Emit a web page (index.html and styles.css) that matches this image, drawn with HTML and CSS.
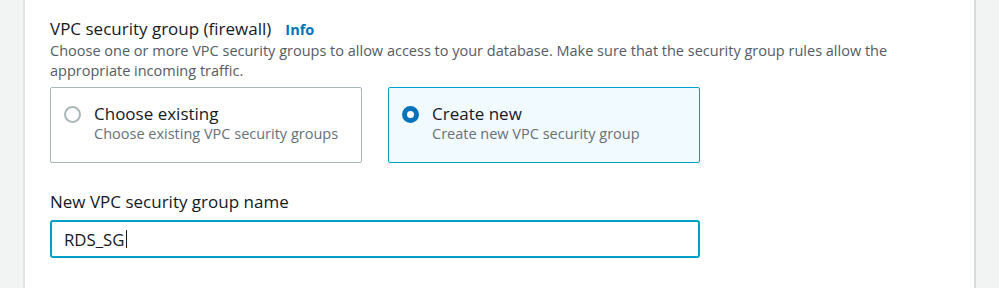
FILE: index.html
```html
<!DOCTYPE html>
<html lang="en">
<head>
  <meta charset="UTF-8">
  <title>VPC security group</title>
  <link rel="stylesheet" href="styles.css">
</head>
<body>
  <div class="page">
    <section class="panel">
      <div class="field">
        <div class="label-row">
          <span class="label">VPC security group (firewall)</span>
          <a class="info" href="#">Info</a>
        </div>
        <p class="description">Choose one or more VPC security groups to allow access to your database. Make sure that the security group rules allow the appropriate incoming traffic.</p>

        <div class="tiles">
          <label class="tile">
            <span class="radio"></span>
            <span class="tile-text">
              <span class="tile-title">Choose existing</span>
              <span class="tile-sub">Choose existing VPC security groups</span>
            </span>
          </label>
          <label class="tile selected">
            <span class="radio checked"></span>
            <span class="tile-text">
              <span class="tile-title">Create new</span>
              <span class="tile-sub">Create new VPC security group</span>
            </span>
          </label>
        </div>
      </div>

      <div class="field">
        <div class="label">New VPC security group name</div>
        <div class="input">RDS_SG<span class="caret"></span></div>
      </div>
    </section>
  </div>
</body>
</html>
```

FILE: styles.css
```css
body {
  margin: 0;
  background-color: #f2f3f3;
  font-family: 'Open Sans', 'Noto Sans', sans-serif;
  font-size: 14px;
  color: #16191f;
}
.page {
  padding: 0 23px 0 23px;
  height: 288px;
}
.panel {
  background-color: white;
  border-left: 2px solid #e1e4e4;
  border-right: 2px solid #d5dbdb;
  height: 100%;
  padding: 18px 25px 0 25px;
  box-sizing: border-box;
}
.label-row {
  display: flex;
  align-items: baseline;
  gap: 14px;
}
.label {
  font-size: 17px;
  line-height: 22px;
  color: #16191f;
}
.info {
  color: #0073bb;
  font-weight: 700;
  font-size: 14.5px;
  text-decoration: none;
}
.description {
  margin: 1px 0 0;
  color: #545b64;
  font-size: 14.5px;
  line-height: 20px;
  max-width: 880px;
}
.tiles {
  display: flex;
  gap: 26px;
  margin-top: 6px;
}
.tile {
  width: 312px;
  height: 76px;
  box-sizing: border-box;
  border: 1px solid #aab7b8;
  border-radius: 2px;
  display: flex;
  align-items: flex-start;
  padding: 15px 13px;
  gap: 13px;
}
.tile.selected {
  border-color: #00a1c9;
  background-color: #f1faff;
}
.radio {
  width: 17px;
  height: 17px;
  box-sizing: border-box;
  border: 2px solid #aab7b8;
  border-radius: 50%;
  flex: none;
  margin-top: 3px;
  background: white;
}
.radio.checked {
  border: 5.5px solid #0073bb;
}
.tile-text {
  display: flex;
  flex-direction: column;
}
.tile-title {
  font-size: 17px;
  line-height: 22px;
}
.tile-sub {
  font-size: 14.5px;
  line-height: 18px;
  color: #687078;
}
.field + .field {
  margin-top: 28px;
}
.input {
  margin-top: 7px;
  width: 650px;
  height: 38px;
  box-sizing: border-box;
  border: 2px solid #00a1c9;
  border-radius: 3px;
  padding: 0 0 0 12px;
  display: flex;
  align-items: center;
  font-size: 16.8px;
}
.caret {
  width: 1px;
  height: 18px;
  margin-left: 1px;
  background: #16191f;
}
```
